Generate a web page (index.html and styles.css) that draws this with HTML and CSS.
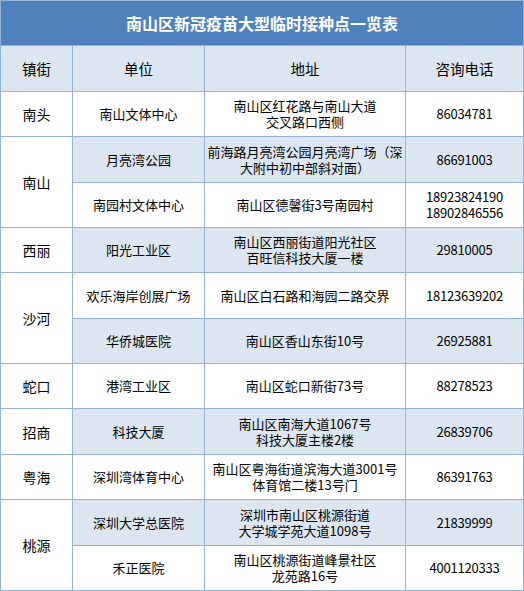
FILE: index.html
```html
<!DOCTYPE html>
<html lang="zh-CN">
<head>
<meta charset="utf-8">
<title>南山区新冠疫苗大型临时接种点一览表</title>
<link rel="stylesheet" href="styles.css">
</head>
<body>
<table class="sheet">
  <colgroup>
    <col class="c-street">
    <col class="c-unit">
    <col class="c-addr">
    <col class="c-tel">
  </colgroup>
  <tr class="r-title"><td colspan="4" class="title">南山区新冠疫苗大型临时接种点一览表</td></tr>
  <tr class="r46 head"><td>镇街</td><td>单位</td><td>地址</td><td>咨询电话</td></tr>
  <tr class="r45"><td class="street">南头</td><td>南山文体中心</td><td>南山区红花路与南山大道<br>交叉路口西侧</td><td class="num">86034781</td></tr>
  <tr class="r46 alt"><td class="street" rowspan="2">南山</td><td>月亮湾公园</td><td>前海路月亮湾公园月亮湾广场（深<br>大附中初中部斜对面）</td><td class="num">86691003</td></tr>
  <tr class="r45"><td>南园村文体中心</td><td>南山区德馨街3号南园村</td><td class="num">18923824190<br>18902846556</td></tr>
  <tr class="r45 alt"><td class="street">西丽</td><td>阳光工业区</td><td>南山区西丽街道阳光社区<br>百旺信科技大厦一楼</td><td class="num">29810005</td></tr>
  <tr class="r46"><td class="street" rowspan="2">沙河</td><td>欢乐海岸创展广场</td><td>南山区白石路和海园二路交界</td><td class="num">18123639202</td></tr>
  <tr class="r45 alt"><td>华侨城医院</td><td>南山区香山东街10号</td><td class="num">26925881</td></tr>
  <tr class="r45"><td class="street">蛇口</td><td>港湾工业区</td><td>南山区蛇口新街73号</td><td class="num">88278523</td></tr>
  <tr class="r46 alt"><td class="street">招商</td><td>科技大厦</td><td>南山区南海大道1067号<br>科技大厦主楼2楼</td><td class="num">26839706</td></tr>
  <tr class="r45"><td class="street">粤海</td><td>深圳湾体育中心</td><td>南山区粤海街道滨海大道3001号<br>体育馆二楼13号门</td><td class="num">86391763</td></tr>
  <tr class="r46 alt"><td class="street" rowspan="2">桃源</td><td>深圳大学总医院</td><td>深圳市南山区桃源街道<br>大学城学苑大道1098号</td><td class="num">21839999</td></tr>
  <tr class="r45"><td>禾正医院</td><td>南山区桃源街道峰景社区<br>龙苑路16号</td><td class="num">4001120333</td></tr>
</table>
</body>
</html>
```
FILE: styles.css
```css
html, body {
  margin: 0;
  padding: 0;
  background: #ffffff;
}

.sheet {
  border-collapse: collapse;
  table-layout: fixed;
  width: 523px;
  font-family: "Noto Sans CJK SC", "Liberation Sans", sans-serif;
  font-size: 13px;
  line-height: 16px;
  color: #000;
}

.c-street { width: 72px; }
.c-unit { width: 132px; }
.c-addr { width: 201px; }
.c-tel { width: 118px; }

.sheet td {
  border: 1px solid #95b3d7;
  text-align: center;
  vertical-align: middle;
  padding: 0 2px;
  background: #ffffff;
}

.r-title td {
  height: 44px;
  padding: 0;
}

.title {
  background: #4f81bd !important;
  color: #ffffff;
  font-size: 16px;
  font-weight: bold;
  letter-spacing: 0;
}

.r45 td { height: 44px; }
.r46 td { height: 45px; }

.head td {
  background: #dce6f1;
  font-size: 14.5px;
}

.alt td {
  background: #dce6f1;
}

.alt td.street {
  background: #ffffff;
}

.street {
  font-size: 14px;
}

.num {
  letter-spacing: -0.2px;
}
```
